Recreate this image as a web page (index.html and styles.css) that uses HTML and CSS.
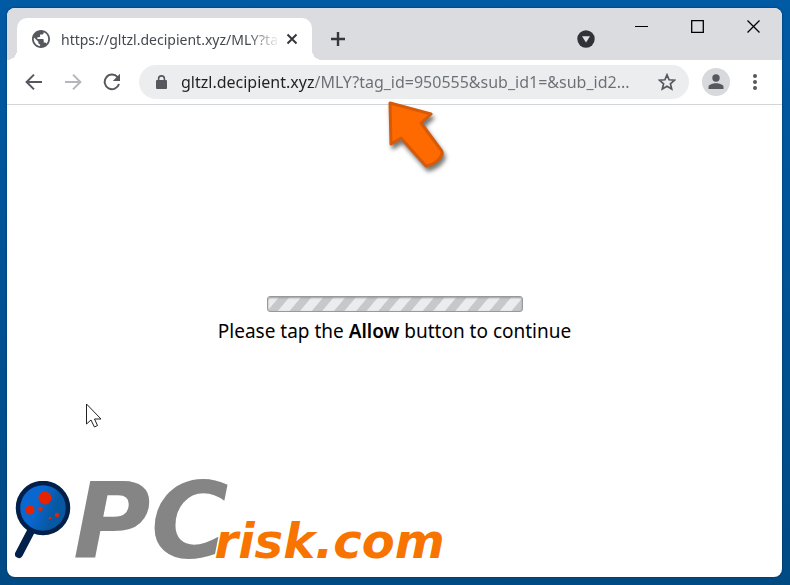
FILE: index.html
```html
<!DOCTYPE html>
<html lang="en">
<head>
    <meta charset="UTF-8">
    <meta name="viewport" content="width=device-width, initial-scale=1.0">
    <title>gltzl.decipient.xyz</title>
    <link rel="stylesheet" href="styles.css">
</head>
<body>
    <div class="window">
        <header class="tab-strip">
            <div class="tab">
                <svg class="globe" viewBox="2 2 20 20" width="18" height="18">
                    <path fill="#55585d" d="M12 2C6.480 2 2 6.480 2 12s4.480 10 10 10 10-4.480 10-10S17.520 2 12 2zm-1 17.930c-3.950-.490-7-3.850-7-7.930 0-.620.080-1.210.210-1.790L9 15v1c0 1.100.900 2 2 2v1.930zm6.900-2.540c-.260-.810-1-1.390-1.900-1.390h-1v-3c0-.550-.450-1-1-1H8v-2h2c.550 0 1-.450 1-1V7h2c1.100 0 2-.900 2-2v-.410c2.930 1.190 5 4.060 5 7.410 0 2.080-.800 3.970-2.100 5.390z"/>
                </svg>
                <span class="tab-title">https://gltzl.decipient.xyz/MLY?ta</span>
                <button class="icon-button tab-close" aria-label="Close tab">
                    <svg viewBox="0 0 12 12" width="12" height="12"><path d="M1.5 1.5 10.5 10.5M10.5 1.5 1.5 10.5" stroke="#35373b" stroke-width="2"/></svg>
                </button>
            </div>
            <button class="icon-button new-tab" aria-label="New tab">
                <svg viewBox="0 0 14 14" width="14" height="14"><path d="M7 0V14M0 7H14" stroke="#35373b" stroke-width="2.4"/></svg>
            </button>
            <button class="icon-button tab-search" aria-label="Search tabs">
                <svg viewBox="0 0 18 18" width="18" height="18"><circle cx="9" cy="9" r="8.7" fill="#303237"/><path d="M5 6.2H13L9 12.4z" fill="#dee1e6"/></svg>
            </button>
            <div class="window-buttons">
                <button class="icon-button" aria-label="Minimize">
                    <svg viewBox="0 0 13 13" width="13" height="13"><path d="M0 6.5H13" stroke="#000"/></svg>
                </button>
                <button class="icon-button" aria-label="Maximize">
                    <svg viewBox="0 0 13 13" width="13" height="13"><path d="M.7.7H12.3V12.3H.7z" fill="none" stroke="#000" stroke-width="1.3"/></svg>
                </button>
                <button class="icon-button" aria-label="Close">
                    <svg viewBox="0 0 13 13" width="13" height="13"><path d="M.5.5 12.5 12.5M12.5.5.5 12.5" stroke="#000" stroke-width="1.3"/></svg>
                </button>
            </div>
        </header>

        <nav class="toolbar">
            <button class="icon-button" aria-label="Back">
                <svg viewBox="0 0 18 18" width="18" height="18"><path d="M17 9H2M9 1.6 1.6 9 9 16.4" fill="none" stroke="#55585d" stroke-width="2"/></svg>
            </button>
            <button class="icon-button" aria-label="Forward">
                <svg viewBox="0 0 18 18" width="18" height="18"><path d="M1 9H16M9 1.6 16.4 9 9 16.4" fill="none" stroke="#b5b7ba" stroke-width="2"/></svg>
            </button>
            <button class="icon-button" aria-label="Reload">
                <svg viewBox="0 0 18 18" width="18" height="18"><path d="M14.6 4.2A7.3 7.3 0 1 0 16 11" fill="none" stroke="#55585d" stroke-width="2"/><path d="M17 .8V8H9.8z" fill="#55585d"/></svg>
            </button>
            <div class="address-bar">
                <svg viewBox="0 0 11 14" width="11" height="14"><rect y="5" width="11" height="9" rx="1" fill="#55585d"/><path d="M2.6 6V3.8a2.9 2.9 0 0 1 5.8 0V6" fill="none" stroke="#55585d" stroke-width="1.6"/></svg>
                <input class="address" type="text" aria-label="Address" value="gltzl.decipient.xyz/MLY?tag_id=950555&amp;sub_id1=&amp;sub_id2...">
                <button class="icon-button" aria-label="Bookmark this page">
                    <svg viewBox="0 0 18 18" width="18" height="18"><path d="M9 1.8 11.1 6.8 16.6 7.2 12.4 10.8 13.7 16.1 9 13.3 4.3 16.1 5.6 10.8 1.4 7.2 6.9 6.8z" fill="none" stroke="#55585d" stroke-width="1.7"/></svg>
                </button>
            </div>
            <button class="icon-button profile" aria-label="Profile">
                <svg viewBox="0 0 16 16" width="16" height="16"><circle cx="8" cy="4" r="3.7" fill="#55585d"/><path d="M.5 15V13C.5 10.6 5 9.3 8 9.3S15.5 10.6 15.5 13V15z" fill="#55585d"/></svg>
            </button>
            <button class="icon-button menu" aria-label="Menu">
                <svg viewBox="0 0 4 16" width="4" height="16"><g fill="#55585d"><circle cx="2" cy="2" r="2"/><circle cx="2" cy="8" r="2"/><circle cx="2" cy="14" r="2"/></g></svg>
            </button>
        </nav>

        <main class="page">
            <progress class="loader" aria-label="Loading"></progress>
            <p class="message">Please tap the <strong>Allow</strong> button to continue</p>

            <div class="logo">
                <svg class="magnifier" viewBox="0 0 58 80" width="58" height="80">
                    <defs>
                        <linearGradient id="lens" x1="0" y1="0.2" x2="1" y2="0.6">
                            <stop offset="0.4" stop-color="#0a67cf"/>
                            <stop offset="0.75" stop-color="#0758a2"/>
                        </linearGradient>
                    </defs>
                    <path d="M16 50 4 73" stroke="#03204a" stroke-width="8" stroke-linecap="round"/>
                    <circle cx="28" cy="27" r="25" fill="url(#lens)" stroke="#03204a" stroke-width="4.5"/>
                    <g fill="#e62200">
                        <circle cx="30" cy="17" r="6.5"/>
                        <circle cx="15" cy="29" r="4.5"/>
                        <circle cx="25.5" cy="28" r="2.2"/>
                        <circle cx="42" cy="34" r="2.2"/>
                        <circle cx="35" cy="37" r="1.3"/>
                    </g>
                </svg>
                <span class="logo-pc">PC</span>
                <span class="logo-risk">risk.com</span>
            </div>
        </main>
    </div>

    <svg class="pointer-arrow" viewBox="0 0 66 78" width="66" height="78">
        <path d="M4 4 45 15 35 24 55 51Q58 55 53 60 47 66 40 67L15 39 5 45z" fill="#ff6a00" stroke="#d65a08" stroke-width="3" stroke-linejoin="round"/>
    </svg>
    <svg class="cursor" viewBox="0 0 16 25" width="16" height="25">
        <path d="M.5 1V21L5 17 8.4 24 11.5 22.5 8.5 16H15z" fill="#fff" stroke="#222"/>
    </svg>
</body>
</html>
```

FILE: styles.css
```css
* {
    box-sizing: border-box;
}
body {
    margin: 0;
    min-height: 100vh;
    padding: 8px 8px 8px 7px;
    display: flex;
    position: relative;
    background: linear-gradient(#005aa4, #004a84);
    font-family: "Noto Sans", "Open Sans", sans-serif;
}
.window {
    flex: 1;
    min-width: 0;
    display: flex;
    flex-direction: column;
    background: #fff;
    border-radius: 8px;
    box-shadow: 0 0 2px #002a50;
}
.icon-button {
    display: flex;
    align-items: center;
    justify-content: center;
    flex: none;
    padding: 0;
    border: none;
    background: none;
}

/* Tab strip */
.tab-strip {
    display: flex;
    height: 52px;
    padding: 10px 22px 0 10px;
    background: #dadce0;
    border-radius: 8px 8px 0 0;
}
.tab {
    position: relative;
    flex: 0 1 295px;
    min-width: 0;
    display: flex;
    align-items: center;
    padding: 0 14px 0 15px;
    background: #fff;
    border-radius: 10px 10px 0 0;
}
.tab::before,
.tab::after {
    content: "";
    position: absolute;
    bottom: 0;
    width: 10px;
    height: 10px;
}
.tab::before {
    right: 100%;
    background: radial-gradient(circle at 0 0, transparent 10px, #fff 10px);
}
.tab::after {
    left: 100%;
    background: radial-gradient(circle at 100% 0, transparent 10px, #fff 10px);
}
.globe {
    flex: none;
}
.tab-title {
    flex: 1;
    margin: 0 6px 0 11px;
    white-space: nowrap;
    font-size: 14px;
    color: #45484d;
    -webkit-mask-image: linear-gradient(90deg, #000 85%, transparent);
    mask-image: linear-gradient(90deg, #000 85%, transparent);
}
.new-tab {
    margin-left: 19px;
}
.tab-search {
    margin-left: auto;
}
.window-buttons {
    display: flex;
    gap: 43px;
    height: 16px;
    margin-left: 40px;
}

/* Toolbar */
.toolbar {
    display: flex;
    align-items: center;
    gap: 21px;
    height: 45px;
    padding: 0 25px 0 18px;
    border-bottom: 1px solid #d3d5d8;
}
.address-bar {
    flex: 1;
    min-width: 0;
    display: flex;
    align-items: center;
    height: 34px;
    margin: 0 -8px 0 -3px;
    padding: 0 13px 0 17px;
    background: #ebedef;
    border-radius: 17px;
}
.address {
    flex: 1;
    min-width: 0;
    margin: 0 12px 0 14px;
    padding: 0;
    border: none;
    outline: none;
    font-family: inherit;
    font-size: 16px;
    color: #202124;
    background: linear-gradient(90deg, #202124 134px, #6b6e73 134px);
    -webkit-background-clip: text;
    background-clip: text;
    -webkit-text-fill-color: transparent;
}
.profile {
    width: 28px;
    height: 28px;
    background: #d7d9dd;
    border-radius: 50%;
}
.menu {
    margin-left: 2px;
}

/* Page */
.page {
    flex: 1;
    display: flex;
    flex-direction: column;
    align-items: center;
    padding: 191px 8px 12px;
}
.loader {
    appearance: none;
    width: 256px;
    height: 16px;
    border: 1px solid #97999c;
    border-radius: 3px;
    background: repeating-linear-gradient(130deg, #ebecee 0 8px, #c6c8ca 9px 16px, #ebecee 17px);
    box-shadow: inset 0 1px 2px #999b9e;
}
.loader::-webkit-progress-bar {
    background: none;
}
.message {
    margin: 5px 0 0;
    font-size: 19px;
    line-height: 28px;
    color: #000;
}
.message strong {
    font-weight: 600;
}
.logo {
    display: flex;
    align-items: baseline;
    align-self: flex-start;
    margin-top: auto;
    font-family: "DejaVu Sans", sans-serif;
    font-weight: bold;
    font-style: italic;
}
.magnifier {
    align-self: flex-start;
}
.logo-pc {
    font-size: 106px;
    line-height: 82px;
    color: #858585;
}
.logo-risk {
    margin-left: -14px;
    font-size: 48px;
    line-height: 48px;
    color: #f77400;
}

/* Drawn over the window */
.pointer-arrow {
    position: absolute;
    left: 386px;
    top: 99px;
    filter: drop-shadow(2px 4px 2px #777);
}
.cursor {
    position: absolute;
    left: 86px;
    top: 403px;
}
```
